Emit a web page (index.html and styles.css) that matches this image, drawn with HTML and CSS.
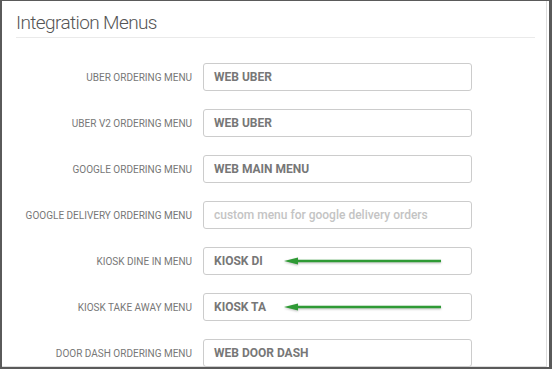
FILE: index.html
```html
<!DOCTYPE html>
<html>
<head>
<meta charset="utf-8">
<link rel="stylesheet" href="styles.css">
</head>
<body>
<div class="frame">
  <div class="panel">
    <h2 class="title">Integration Menus</h2>
    <div class="rule"></div>
    <div class="rows">
      <div class="row"><label class="lbl">UBER ORDERING MENU</label><div class="field"><span class="val">WEB UBER</span></div></div>
      <div class="row"><label class="lbl">UBER V2 ORDERING MENU</label><div class="field"><span class="val">WEB UBER</span></div></div>
      <div class="row"><label class="lbl">GOOGLE ORDERING MENU</label><div class="field"><span class="val">WEB MAIN MENU</span></div></div>
      <div class="row"><label class="lbl">GOOGLE DELIVERY ORDERING MENU</label><div class="field"><span class="ph">custom menu for google delivery orders</span></div></div>
      <div class="row"><label class="lbl">KIOSK DINE IN MENU</label><div class="field"><span class="val">KIOSK DI</span>
        <svg class="arrow" width="162" height="12" viewBox="0 0 162 12"><path d="M10 6 H158" stroke="#2f9a35" stroke-width="2.4" fill="none"/><path d="M1 6 L15 2.5 L15 9.5 Z" fill="#2f9a35"/></svg></div></div>
      <div class="row"><label class="lbl">KIOSK TAKE AWAY MENU</label><div class="field"><span class="val">KIOSK TA</span>
        <svg class="arrow" width="162" height="12" viewBox="0 0 162 12"><path d="M10 6 H158" stroke="#2f9a35" stroke-width="2.4" fill="none"/><path d="M1 6 L15 2.5 L15 9.5 Z" fill="#2f9a35"/></svg></div></div>
      <div class="row"><label class="lbl">DOOR DASH ORDERING MENU</label><div class="field"><span class="val">WEB DOOR DASH</span></div></div>
    </div>
  </div>
</div>
</body>
</html>
```
FILE: styles.css
```css
html, body { margin: 0; padding: 0; background: #fff; }
.frame {
  width: 552px; height: 369px; box-sizing: border-box;
  border-top: 1px solid #5a5a5a; border-left: 2px solid #5a5a5a;
  border-right: 3px solid #5a5a5a; border-bottom: 2px solid #5a5a5a;
  overflow: hidden; font-family: Roboto, "Liberation Sans", sans-serif;
}
.panel {
  height: 100%; box-sizing: border-box;
  border-right: 1px solid #ddd; border-bottom: 1px solid #ddd;
  margin-right: 2px; padding-left: 14px; padding-top: 10px;
}
.title {
  margin: 0; font-weight: 300; font-size: 19px; line-height: 24px; color: #555;
  letter-spacing: -0.6px;
}
.rule { height: 1px; background: #eaeaea; margin-top: 2px; width: 519px; }
.rows { display: flex; flex-direction: column; gap: 18px; padding-top: 25px; }
.row { display: flex; align-items: center; gap: 11px; }
.lbl { width: 176px; text-align: right; font-size: 10px; color: #777; }
.field {
  position: relative; width: 269px; height: 28px; box-sizing: border-box;
  border: 1px solid #ccc; border-radius: 3px; padding-left: 10px;
  display: flex; align-items: center;
}
.val { font-size: 12px; font-weight: 700; color: #777; }
.ph { font-size: 12px; font-weight: 500; color: #c4c4c4; }
.arrow { position: absolute; left: 79px; top: 7px; filter: drop-shadow(0 1px 1px rgba(0,0,0,0.25)); }
```
